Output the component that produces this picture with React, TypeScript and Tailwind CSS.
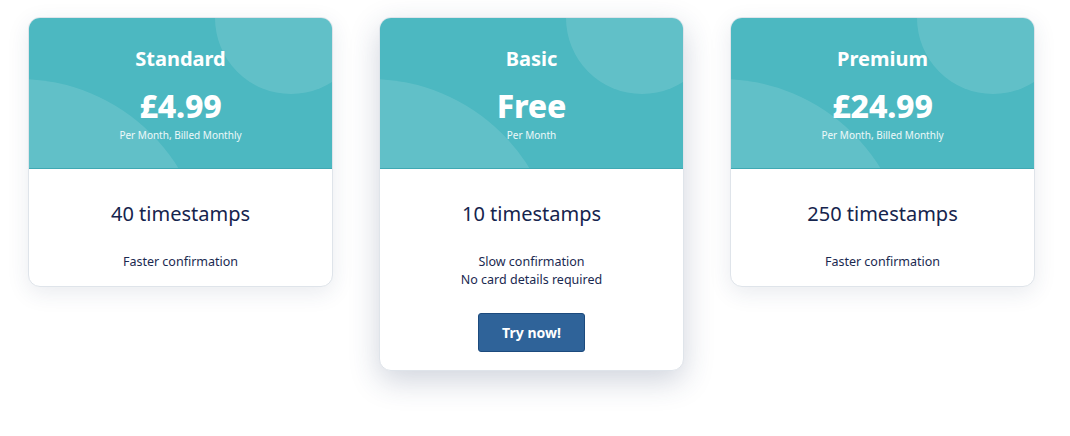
import React from "react";

type Plan = {
  name: string;
  price: string;
  sub: string;
  count: string;
  features: string[];
  cta?: boolean;
  featured?: boolean;
};

const plans: Plan[] = [
  { name: "Standard", price: "£4.99", sub: "Per Month, Billed Monthly", count: "40 timestamps", features: ["Faster confirmation"] },
  { name: "Basic", price: "Free", sub: "Per Month", count: "10 timestamps", features: ["Slow confirmation", "No card details required"], cta: true, featured: true },
  { name: "Premium", price: "£24.99", sub: "Per Month, Billed Monthly", count: "250 timestamps", features: ["Faster confirmation"] },
];

function Card({ p }: { p: Plan }) {
  return (
    <div
      className={
        "w-[305px] shrink-0 rounded-[12px] overflow-hidden bg-white border border-[#dfe4ea] " +
        (p.featured
          ? "shadow-[0_10px_30px_rgba(40,60,100,0.22)]"
          : "shadow-[0_6px_22px_rgba(40,60,100,0.10)]")
      }
    >
      <div className="relative h-[151px] overflow-hidden bg-[#4cb8c1] border-b border-[#3fa9b3] text-white text-center">
        <div className="absolute left-[186px] top-[-76px] w-[152px] h-[152px] rounded-full bg-white/[0.12]" />
        <div className="absolute left-[-197px] top-[61px] w-[374px] h-[374px] rounded-full bg-white/[0.12]" />
        <div className="relative pt-[27px] flex flex-col items-center">
          <div className="text-[20px] leading-[28px] font-bold">{p.name}</div>
          <div className="mt-[13px] text-[32px] leading-[40px] font-extrabold tracking-[-0.2px]">{p.price}</div>
          <div className="mt-[2px] text-[10px] leading-[14px] text-white/90">{p.sub}</div>
        </div>
      </div>
      <div className="flex flex-col items-center text-center text-[#15244d] pt-[31px] pb-[15px]">
        <div className="text-[20px] leading-[28px]">{p.count}</div>
        <div className="mt-[25px] text-[12.5px] leading-[18px] text-[#1a2950]">
          {p.features.map((f) => (
            <div key={f}>{f}</div>
          ))}
        </div>
        {p.cta && (
          <button className="mt-[24px] mb-[3px] w-[107px] h-[39px] rounded-[3px] bg-[#2f6399] border border-[#1c4a7d] text-white text-[14px] font-bold">
            Try now!
          </button>
        )}
      </div>
    </div>
  );
}

export default function App() {
  return (
    <div
      className="w-[1070px] h-[436px] bg-white flex items-start gap-[46px] pl-[28px] pt-[17px]"
      style={{ fontFamily: '"Noto Sans", "Open Sans", sans-serif' }}
    >
      {plans.map((p) => (
        <Card key={p.name} p={p} />
      ))}
    </div>
  );
}
